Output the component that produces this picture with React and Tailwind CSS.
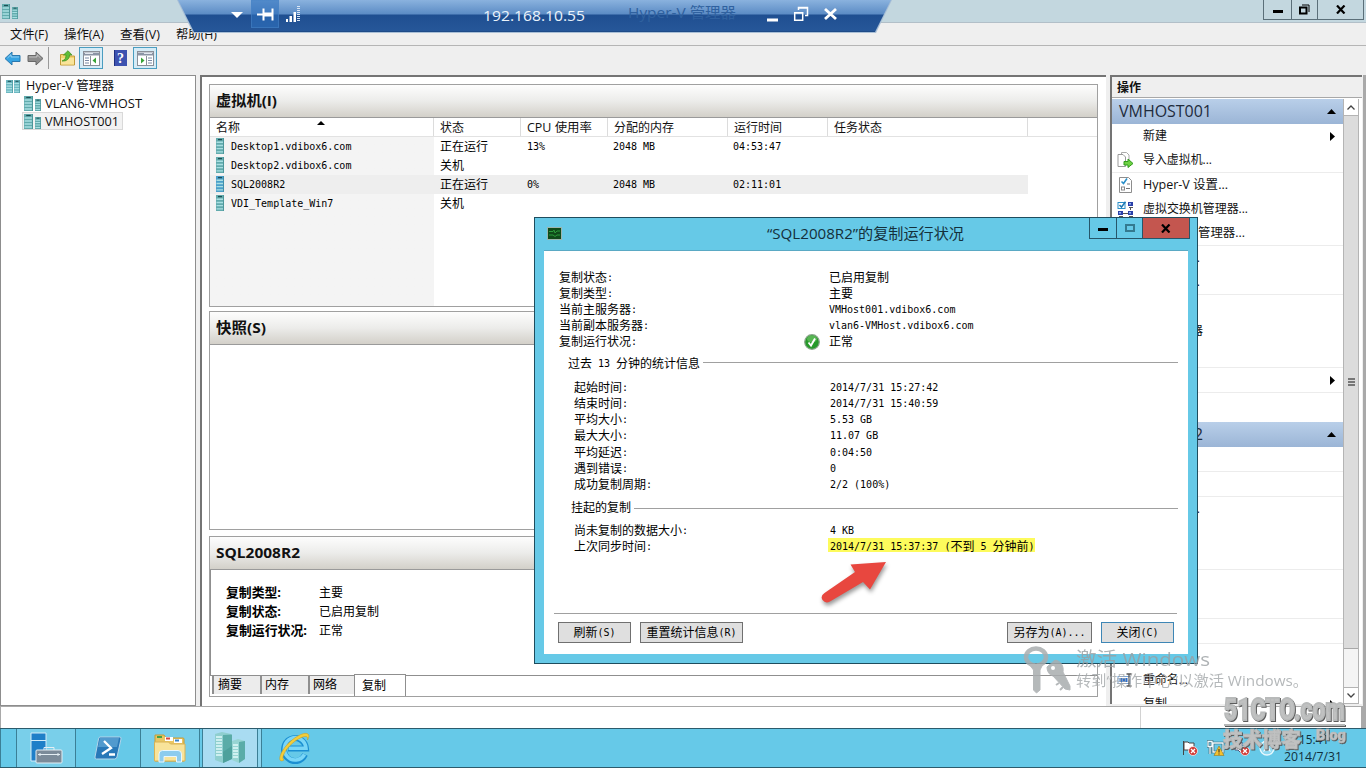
import React from 'react';

// Bitmap-like text: 12px Chinese glyphs with 6px wide latin cells
const Sim = ({ text }) => (
  <span className="inline-block align-top font-['Noto_Sans_CJK_SC',sans-serif] text-[12px] whitespace-pre">
    {text.split(/([\x20-\x7e]+)/).map((part, i) =>
      i % 2 ? (
        <span key={i} className="relative -top-px leading-[0px] font-['DejaVu_Sans_Mono','Liberation_Mono',monospace] text-[10px]">{part}</span>
      ) : (
        part
      )
    )}
  </span>
);

// Text stretched to an exact width
const Fit = ({ text, width, size, height = 20, weight = 400, fill = '#111' }) => (
  <svg width={width} height={height} className="overflow-visible shrink-0 block font-['Open_Sans','Noto_Sans_CJK_SC',sans-serif]">
    <text x="0" y={height / 2 + size * 0.37} fontSize={size} fontWeight={weight} fill={fill} textLength={width} lengthAdjust="spacingAndGlyphs">{text}</text>
  </svg>
);

const Rack = ({ w = 8, h = 15, color = '#62abad' }) => (
  <svg width={w} height={h} viewBox="0 0 8 15" preserveAspectRatio="none" className="shrink-0 block">
    <rect width="8" height="15" fill={color} />
    <path d="M.5 4h6.500M.5 7h6.500M.5 10h6.500M.5 13h6.500" stroke="#a9dfe2" strokeWidth="1.300" />
    <path d="M2 1.500h4" stroke="#1d4f55" strokeWidth="1.200" />
    <path d="M7.700 0v15" stroke="#3a8288" strokeWidth=".6" />
  </svg>
);

const Host = () => (
  <div className="flex items-end gap-[2px] w-[17px] shrink-0">
    <Rack w={9} h={15} />
    <Rack w={6} h={12} />
  </div>
);

const HostPair = () => (
  <div className="flex w-[14px] gap-px shrink-0 pt-[2px]">
    <Rack w={7} h={13} color="#6db8c2" />
    <Rack w={6} h={13} color="#6db8c2" />
  </div>
);

const Arrow = ({ fill, stroke, flip }) => (
  <svg width="17" height="15" viewBox="0 0 17 15" className={flip ? 'scale-x-[-1]' : ''}>
    <path d="M1 7.500 8 1v3.500h8v6H8V14z" fill={fill} stroke={stroke} strokeLinejoin="round" />
    <path d="M3.500 7 7 3.600V6h8" fill="none" stroke="#fff" strokeOpacity=".45" />
  </svg>
);

const PaneIcon = ({ flip }) => (
  <span className="w-[24px] h-[22px] border border-[#4a9dc0] bg-[#d5ebf6] flex items-center justify-center">
    <svg width="17" height="15" viewBox="0 0 17 15" className={flip ? 'scale-x-[-1]' : ''}>
      <rect x=".5" y=".5" width="16" height="14" fill="#fff" stroke="#8a8f98" />
      <path d="M1 1.500h15v3H1z" fill="#8b94a5" />
      <path d="M2 2.500h8" stroke="#e3e7ee" />
      <path d="M7.500 5v9" stroke="#8a8f98" />
      <path d="M2 7h4M2 9.500h4M2 12h4" stroke="#7a8aa5" />
      <path d="M13 6.500v6L9.500 9.500z" fill="#37a337" />
    </svg>
  </span>
);

const MenuBar = () => (
  <div className="h-[23px] bg-[#efefef] border-b border-[#b5b5b5] flex items-center pl-[10px] gap-4 shrink-0">
    <Fit text="文件(F)" width={38} size={12.5} />
    <Fit text="操作(A)" width={40} size={12.5} />
    <Fit text="查看(V)" width={40} size={12.5} />
    <Fit text="帮助(H)" width={41} size={12.5} />
  </div>
);

const ToolBar = () => (
  <div className="h-[29px] bg-[#efefef] flex items-center pl-1 pb-[5px] shrink-0">
    <Arrow fill="#35a3e2" stroke="#2b78ae" />
    <span className="w-[6px]" />
    <Arrow fill="#8c8c8c" stroke="#686868" flip />
    <span className="w-px h-[22px] bg-[#9a9a9a] ml-1 mr-[10px]" />
    <svg width="17" height="16" viewBox="0 0 17 16">
      <path d="M1.500 4.500h5l1.500 1.500h7.500v9h-14z" fill="#f3d56f" stroke="#c39a36" />
      <path d="M2 14.500V8h13v6.500z" fill="#f9e49a" />
      <path d="M3 11c3-1 4-3 4-6H4.500L9 .7 13 5h-2.500c0 4-3 6.500-7.500 6z" fill="#5fbd36" stroke="#3c8c1d" strokeWidth=".7" />
    </svg>
    <span className="w-[3px]" />
    <PaneIcon />
    <span className="w-[11px]" />
    <svg width="13" height="16" viewBox="0 0 13 16">
      <rect width="13" height="16" fill="#3d52b0" />
      <path d="M.5 0v16" stroke="#1e2f80" />
      <text x="3" y="13" fontSize="14" fontWeight="700" fill="#fff" fontFamily="Liberation Serif">?</text>
    </svg>
    <span className="w-[6px]" />
    <PaneIcon flip />
  </div>
);

const TreePane = () => (
  <div className="w-[196px] h-[631px] bg-white border border-[#8d8d8d] shrink-0">
    <div className="flex items-center h-[18px] pl-[5px] gap-[6px]">
      <HostPair />
      <Fit text="Hyper-V 管理器" width={88} size={12.5} />
    </div>
    <div className="flex items-center h-[18px] pl-[23px] gap-1">
      <Host />
      <Fit text="VLAN6-VMHOST" width={97} size={12.5} />
    </div>
    <div className="flex items-center h-[18px] ml-[21px] pl-[1px] gap-1 w-[101px] bg-[#f2f2f2] border border-[#d9d9d9]">
      <Host />
      <Fit text="VMHOST001" width={74} size={12.5} />
    </div>
  </div>
);

const SectionHead = ({ text, width }) => (
  <div className="h-[33px] bg-gradient-to-b from-[#fdfdfd] via-[#ececea] to-[#d3d0c9] border-b border-[#9a9a9a] flex items-center pl-[6px] shrink-0">
    <Fit text={text} width={width} size={14.5} weight={700} />
  </div>
);

const vms = [
  { name: 'Desktop1.vdibox6.com', state: '正在运行', cpu: '13%', mem: '2048 MB', time: '04:53:47' },
  { name: 'Desktop2.vdibox6.com', state: '关机', cpu: '', mem: '', time: '' },
  { name: 'SQL2008R2', state: '正在运行', cpu: '0%', mem: '2048 MB', time: '02:11:01', selected: true },
  { name: 'VDI_Template_Win7', state: '关机', cpu: '', mem: '', time: '' },
];

const columns = [
  { label: '名称', w: 'w-[224px]', t: 24 },
  { label: '状态', w: 'w-[87px]', t: 24 },
  { label: 'CPU 使用率', w: 'w-[87px]', t: 65 },
  { label: '分配的内存', w: 'w-[120px]', t: 60 },
  { label: '运行时间', w: 'w-[100px]', t: 48 },
  { label: '任务状态', w: 'w-[200px]', t: 48 },
];

const VmTable = () => (
  <div className="flex-1 flex flex-col bg-gradient-to-r from-[#f4f4f4] from-[224px] to-white to-[224px]">
    <div className="flex h-[19px] bg-white border-b border-[#e2e2e2] shrink-0">
      {columns.map((c, i) => (
        <div key={i} className={`${c.w} relative shrink-0 border-r border-[#dcdcdc] pl-[6px] pt-[2px] flex items-center`}>
          <Fit text={c.label} width={c.t} size={12} height={18} />
          {i === 0 && (
            <svg width="8" height="4" className="absolute left-[107px] top-[3px]">
              <path d="M0 4 4 0l4 4z" fill="#000" />
            </svg>
          )}
        </div>
      ))}
    </div>
    {vms.map((vm) => (
      <div key={vm.name} className={`flex h-[19px] leading-[17px] w-[818px] text-black ${vm.selected ? 'bg-[#eeeeee]' : ''}`}>
        <div className="w-[224px] pl-[6px] flex gap-[7px]">
          <span className="pt-px"><Rack w={8} h={16} color={vm.selected ? '#4a9fca' : '#62abad'} /></span>
          <Sim text={vm.name} />
        </div>
        <div className="w-[87px] pl-[6px]"><Sim text={vm.state} /></div>
        <div className="w-[87px] pl-[6px]"><Sim text={vm.cpu} /></div>
        <div className="w-[120px] pl-[5px]"><Sim text={vm.mem} /></div>
        <div className="w-[100px] pl-[5px]"><Sim text={vm.time} /></div>
      </div>
    ))}
  </div>
);

const details = [
  ['复制类型:', '主要', 55],
  ['复制状态:', '已启用复制', 55],
  ['复制运行状况:', '正常', 81],
];

const CenterPane = () => (
  <div className="w-[906px] ml-1 bg-white border-l-2 border-t-2 border-[#747474] pl-[7px] pr-2 pt-[7px] flex flex-col shrink-0">
    <div className="h-[223px] border border-[#a0a0a0] flex flex-col shrink-0">
      <SectionHead text="虚拟机(I)" width={61} />
      <VmTable />
    </div>
    <div className="h-[219px] mt-1 border border-[#a0a0a0] shrink-0">
      <SectionHead text="快照(S)" width={50} />
    </div>
    <div className="h-[161px] mt-[6px] border border-[#a0a0a0] flex flex-col shrink-0">
      <SectionHead text="SQL2008R2" width={84} />
      <div className="h-[106px] border-l border-b border-[#8f8f8f] pl-[15px] pt-[13px] shrink-0">
        {details.map(([label, value, w]) => (
          <div key={label} className="flex h-[19px] leading-[17px] text-black">
            <div className="w-[93px]"><Fit text={label} width={w} size={13} weight={700} height={18} fill="#000" /></div>
            <Sim text={value} />
          </div>
        ))}
      </div>
      <div className="flex h-[20px] pl-[2px] text-black">
        <div className="w-12 h-[18px] bg-[#ececec] border-l-2 border-[#8f8f8f] pl-1 leading-[15px]"><Sim text="摘要" /></div>
        <div className="w-12 h-[18px] bg-[#ececec] border-l-2 border-[#8f8f8f] pl-[3px] leading-[15px]"><Sim text="内存" /></div>
        <div className="w-[46px] h-[18px] bg-[#ececec] border-l-2 border-[#8f8f8f] pl-[3px] leading-[15px]"><Sim text="网络" /></div>
        <div className="w-[52px] h-[22px] -mt-[2px] relative bg-white border-x border-t border-[#8f8f8f] pl-[7px] leading-[20px]"><Sim text="复制" /></div>
      </div>
    </div>
  </div>
);

const ImportIcon = () => (
  <svg width="17" height="16" viewBox="0 0 17 16">
    <path d="M4.500.5h5l2.500 2.500v9h-7.500z" fill="#fff" stroke="#aaa" />
    <path d="M1 2.500h5l2.500 2.500v9.500H1z" fill="#fff" stroke="#999" />
    <path d="M7 9.500h4V7l5 4.500-5 4V13H7z" fill="#6ed143" stroke="#2f9a1c" />
  </svg>
);

const SettingsIcon = () => (
  <svg width="17" height="16" viewBox="0 0 17 16">
    <path d="M2.500.5h9L14.500 3.500v12h-12z" fill="#fff" stroke="#8d8d8d" />
    <path d="m4.500 4.500 2 2 3.500-5" fill="none" stroke="#2a8fc9" strokeWidth="1.600" />
    <path d="M10 7h3M9 11.500h4" stroke="#777" />
    <rect x="4.500" y="10" width="3" height="3" fill="none" stroke="#888" />
  </svg>
);

const SwitchIcon = () => (
  <svg width="17" height="16" viewBox="0 0 17 16">
    <rect x="1" y="1.500" width="7" height="6" fill="#fff" stroke="#2a8fc9" />
    <path d="m2.500 4 2 2L8.500.8" fill="none" stroke="#1b79b5" strokeWidth="1.500" />
    <path d="M11 1h5v4h-5zM1 10h5v4H1zM11 10h5v4h-5z" fill="#2a3fa8" />
    <path d="M12 2h2v1.500h-2zM2 11h2v1.500H2zM12 11h2v1.500h-2z" fill="#8fb3ef" />
    <path d="M13.500 6v3M6 12.500h5M2 15.500h4M12 15.500h4M12 6.500h4" stroke="#555" />
  </svg>
);

const RenameIcon = () => (
  <svg width="17" height="14" viewBox="0 0 17 14">
    <rect x="1" y="3.500" width="12" height="7" fill="#fff" stroke="#7aa5d8" />
    <rect x="2.500" y="5" width="8" height="4" fill="#2b6fd0" />
    <path d="M9.500 1h5M12 1v12M9.500 13h5" stroke="#555" strokeWidth="1.300" />
  </svg>
);

const ActionHead = ({ text, width }) => (
  <div className="h-[25px] bg-gradient-to-b from-[#b9cfe9] to-[#9bb5d6] flex items-center justify-between pl-[7px] pr-[7px] shrink-0">
    <Fit text={text} width={width} size={15.5} height={23} fill="#1e2b3c" />
    <svg width="9" height="5"><path d="M0 5 4.500 0 9 5z" fill="#000" /></svg>
  </div>
);

const Action = ({ text, width, icon: Icon, line, more }) => (
  <div className={`flex items-center pl-[5px] pr-2 shrink-0 ${line ? 'h-[25px] border-b border-[#ececec]' : 'h-[24px]'}`}>
    <span className="w-[26px] shrink-0">{Icon && <Icon />}</span>
    {text && <Fit text={text} width={width} size={12} />}
    <span className="flex-1" />
    {more && <svg width="5" height="9"><path d="M0 0 5 4.500 0 9z" fill="#000" /></svg>}
  </div>
);

const ActionsPane = () => (
  <div className="w-[252px] h-[629px] ml-[4px] border-l-2 border-t-2 border-[#747474] bg-white flex flex-col overflow-hidden shrink-0">
    <div className="h-[21px] bg-[#efefef] border-b border-[#a8a8a8] pl-[5px] pt-px flex items-center shrink-0">
      <Fit text="操作" width={24} size={12} weight={700} />
    </div>
    <div className="flex flex-1 min-h-0 pt-px">
      <div className="w-[231px] flex flex-col overflow-hidden">
        <ActionHead text="VMHOST001" width={93} />
        <Action text="新建" width={24} more />
        <Action text="导入虚拟机..." width={69} icon={ImportIcon} line />
        <Action text="Hyper-V 设置..." width={85} icon={SettingsIcon} />
        <Action text="虚拟交换机管理器..." width={105} icon={SwitchIcon} />
        <Action text="虚拟 SAN 管理器..." width={102} line />
        <Action text="编辑磁盘..." width={57} />
        <Action text="检查磁盘..." width={57} line />
        <Action />
        <Action text="删除服务器" width={60} />
        <Action line />
        <Action more line />
        <Action />
        <div className="h-[5px] shrink-0" />
        <ActionHead text="SQL2008R2" width={84} />
        <Action line />
        <Action line />
        <Action text="强行关闭..." width={57} />
        <Action />
        <Action line />
        <Action />
        <Action line />
        <Action line />
        <Action />
        <Action text="重命名..." width={45} icon={RenameIcon} />
        <Action text="复制" width={24} more />
      </div>
      <div className="w-[16px] flex flex-col bg-[#f4f4f4] border-x border-[#b4b4b4]">
        <div className="h-[17px] bg-white border-b border-[#b4b4b4] flex items-center justify-center shrink-0">
          <svg width="8" height="5"><path d="M.5 4.500 4 1l3.500 3.500" fill="none" stroke="#444" strokeWidth="1.300" /></svg>
        </div>
        <div className="h-[533px] bg-[#dcdcdc] border-b border-[#a8a8a8] flex flex-col items-center justify-center gap-px shrink-0">
          <span className="w-[7px] h-[2px] bg-[#777]" />
          <span className="w-[7px] h-[2px] bg-[#777]" />
          <span className="w-[7px] h-[2px] bg-[#777]" />
        </div>
        <div className="flex-1 bg-[#f4f4f4]" />
        <div className="h-[17px] bg-white border-y border-[#b4b4b4] flex items-center justify-center shrink-0">
          <svg width="8" height="5"><path d="M.5.5 4 4 7.500.5" fill="none" stroke="#444" strokeWidth="1.300" /></svg>
        </div>
      </div>
    </div>
  </div>
);

const ConnectionBar = () => (
  <div className="absolute left-[177px] top-0 w-[715px] h-[33px] bg-[#a9bfd6] [clip-path:polygon(0_0,715px_0,699px_33px,16px_33px)]">
    <div className="w-[715px] h-[32px] bg-[linear-gradient(180deg,#8ab2de_0,#5c8cc5_14px,#1f4f91_15px,#265799_31px,#173f76_32px)] [clip-path:polygon(1px_0,714px_0,698px_32px,17px_32px)] flex items-center pl-[54px]">
      <svg width="12" height="6" className="-mt-[2px]"><path d="M0 0h12L6 6z" fill="#fff" /></svg>
      <span className="w-[28px] h-[28px] -mt-1 ml-2 bg-[#2d70bd]/60 border border-[#4a86c8]/50 flex items-center justify-center">
        <svg width="17" height="14" viewBox="0 0 17 14">
          <path d="M0 7.500h6M6.500 1.500v12M15.500 1.500v12" stroke="#fff" strokeWidth="2" />
          <path d="M7 5.500h8v4H7z" fill="#fff" />
        </svg>
      </span>
      <svg width="17" height="16" viewBox="0 0 17 16" className="ml-[6px] -mt-[4px]">
        <path d="M1 13h2v3H1zM4.500 10h2.500v6H4.500zM8.500 6h2.500v10H8.500z" fill="#fff" />
        <path d="M13.500 0v16" stroke="#d9e6f5" strokeWidth="3" strokeDasharray="1 1" />
      </svg>
      <span className="w-[181px]" />
      <span className="-mt-[3px]"><Fit text="192.168.10.55" width={102} size={15} fill="#eaf3fb" /></span>
      <span className="w-[43px]" />
      <span className="pb-[9px]"><Fit text="Hyper-V 管理器" width={108} size={15} fill="#2f619f" /></span>
      <span className="w-[30px]" />
      <svg width="72" height="16" viewBox="0 0 72 16" className="-mt-[4px]">
        <path d="M1 12.500h11v3H1z" fill="#fff" />
        <path d="M32.500 4V1.500h9v8H39M32 2h10" fill="none" stroke="#fff" strokeWidth="1.500" />
        <path d="M28.700 6.700h8v7.500h-8zM28 7h9" fill="none" stroke="#fff" strokeWidth="1.500" />
        <path d="m59 3 11 10M70 3 59 13" stroke="#fff" strokeWidth="2.800" />
      </svg>
    </div>
  </div>
);

const WindowButtons = () => (
  <div className="flex h-[20px] border-x border-b border-[#5b6f79] mr-[2px]">
    <span className="w-[28px] border-r border-[#5b6f79] flex items-center justify-center pt-[3px]"><span className="w-[10px] h-[3px] bg-black" /></span>
    <span className="w-[26px] border-r border-[#5b6f79] flex items-center justify-center">
      <svg width="11" height="11"><path d="M3 1h7v7" fill="none" stroke="#000" /><path d="M1 3.500h6.500v6H1z" fill="none" stroke="#000" strokeWidth="2" /></svg>
    </span>
    <span className="w-[45px] flex items-center justify-center"><svg width="10" height="9"><path d="m1 .5 7.500 8M8.500.5 1 8.500" stroke="#000" strokeWidth="2.200" /></svg></span>
  </div>
);

const DRow = ({ label, value }) => (
  <div className="flex h-[16.150px] leading-[16px]">
    <div className="w-[256px]"><Sim text={label} /></div>
    <Sim text={value} />
  </div>
);

const Button = ({ text, border = 'border-[#707070]', className }) => (
  <div className={`h-[21px] border ${border} bg-[#dfdfdf] text-center leading-[18px] ${className}`}><Sim text={text} /></div>
);

const Dialog = () => (
  <div className="absolute left-[534px] top-[217px] w-[664px] h-[447px] bg-[#66c9e7] border border-[#1e4d5e] flex flex-col text-black">
    <div className="relative h-[32px] flex items-center shrink-0">
      <svg width="15" height="13" className="ml-3 -mt-[2px]" viewBox="0 0 15 13">
        <rect x=".5" y=".5" width="14" height="12" fill="#0f4a1a" stroke="#9db5ae" />
        <path d="M2 4.500h4l1-1.500 1 3 2-2h3M2 8h4l2 1.500L10 8h3" fill="none" stroke="#2d9a3c" />
      </svg>
      <span className="w-[205px]" />
      <Fit text="“SQL2008R2”的复制运行状况" width={197} size={14.5} fill="#14303b" />
      <div className="absolute top-0 right-[7px] flex h-[21px] border-x border-b border-[#26566a]">
        <span className="w-[27px] border-r border-[#26566a] flex items-center justify-center pt-[2px]"><span className="w-[10px] h-[3px] bg-black" /></span>
        <span className="w-[26px] border-r border-[#26566a] flex items-center justify-center"><span className="w-[10px] h-2 border-2 border-[#34798f]" /></span>
        <span className="w-[46px] bg-[#c4564f] flex items-center justify-center"><svg width="10" height="9"><path d="m1 .5 7.500 8M8.500.5 1 8.500" stroke="#000" strokeWidth="2.200" /></svg></span>
      </div>
    </div>
    <div className="relative mx-[9px] mb-[9px] flex-1 bg-white border-t border-[#5aa9c4] flex flex-col">
      <div className="pl-[15px] pt-[18px]">
        {[
          ['复制状态:', '已启用复制'],
          ['复制类型:', '主要'],
          ['当前主服务器:', 'VMHost001.vdibox6.com'],
          ['当前副本服务器:', 'vlan6-VMHost.vdibox6.com'],
          ['复制运行状况:', '正常'],
        ].map(([l, v]) => (
          <div key={l} className="flex h-4 leading-4">
            <div className="w-[245px]"><Sim text={l} /></div>
            <div className="w-[25px] pt-px">
              {v === '正常' && (
                <svg width="16" height="16" viewBox="0 0 16 16">
                  <circle cx="8" cy="8" r="7.300" fill="#279a2b" stroke="#8aa58b" strokeWidth="1.200" />
                  <ellipse cx="8" cy="5" rx="5" ry="3.500" fill="#7fce72" opacity=".55" />
                  <path d="m4.500 8.500 2.500 3 4-7" fill="none" stroke="#fff" strokeWidth="1.900" />
                </svg>
              )}
            </div>
            <Sim text={v} />
          </div>
        ))}
      </div>
      <div className="flex items-center h-4 leading-4 mt-[6px] pl-6 pr-[10px] gap-[3px]">
        <Sim text="过去 13 分钟的统计信息" />
        <span className="flex-1 h-px mb-[2px] bg-[#a0a0a0]" />
      </div>
      <div className="pl-[30px] pt-2">
        <DRow label="起始时间:" value="2014/7/31 15:27:42" />
        <DRow label="结束时间:" value="2014/7/31 15:40:59" />
        <DRow label="平均大小:" value="5.53 GB" />
        <DRow label="最大大小:" value="11.07 GB" />
        <DRow label="平均延迟:" value="0:04:50" />
        <DRow label="遇到错误:" value="0" />
        <DRow label="成功复制周期:" value="2/2 (100%)" />
      </div>
      <div className="flex items-center h-4 leading-4 mt-[7px] pl-[27px] pr-[10px] gap-[3px]">
        <Sim text="挂起的复制" />
        <span className="flex-1 h-px mt-[4px] bg-[#a0a0a0]" />
      </div>
      <div className="pl-[30px] pt-[7px]">
        <DRow label="尚未复制的数据大小:" value="4 KB" />
        <div className="flex h-4 leading-4">
          <div className="w-[254px]"><Sim text="上次同步时间:" /></div>
          <div className="w-[207px] h-[14px] pl-[2px] leading-[16px] bg-[#fdfb5c]"><Sim text="2014/7/31 15:37:37 (不到 5 分钟前)" /></div>
        </div>
      </div>
      <span className="flex-1" />
      <div className="h-[41px] ml-[10px] mr-[11px] border-t border-[#a0a0a0] pt-2 pl-1 pr-[3px] flex">
        <Button text="刷新(S)" className="w-[73px]" />
        <Button text="重置统计信息(R)" className="w-[103px] ml-[9px]" />
        <span className="flex-1" />
        <Button text="另存为(A)..." className="w-[85px]" />
        <Button text="关闭(C)" className="w-[73px] ml-[9px]" border="border-[#3e86b5]" />
      </div>
      <svg width="76" height="52" viewBox="0 0 76 52" className="absolute left-[274px] top-[307px] drop-shadow-[1px_3px_2px_rgba(0,0,0,0.4)]">
        <path d="M68 4 32.500 6.500 37 14 6.500 35Q2 38 4.500 42 7.500 46 12 43.500L45 24l7 7.500z" fill="#e8473f" />
      </svg>
    </div>
  </div>
);

const ServerManagerIcon = () => (
  <svg width="34" height="32" viewBox="0 0 34 32">
    <path d="M2 1h15v28H2z" fill="#1f7fc8" stroke="#d4ecf8" />
    <path d="M2 8.500h15" stroke="#d4ecf8" />
    <rect x="7" y="18" width="26" height="13" rx="1" fill="#7b8b99" stroke="#e4eef3" />
    <path d="M15 18v-2.500h10V18M9 22.500h22M11 21v3M29 21v3" stroke="#e4eef3" fill="none" />
  </svg>
);

const PowerShellIcon = () => (
  <svg width="28" height="24" viewBox="0 0 28 24">
    <path d="M6 1h19.500q2 0 1.500 2l-4 18q-.5 2-2.500 2H2.500Q.5 23 1 21L4.500 3Q5 1 6 1z" fill="#2878b8" stroke="#b4d5ea" />
    <path d="M6 2h19l-2 9H4z" fill="#6cb0dc" opacity=".6" />
    <path d="m10 5 7 7-9 6M15 18.500h6" fill="none" stroke="#fff" strokeWidth="2.300" />
  </svg>
);

const ExplorerIcon = () => (
  <svg width="34" height="30" viewBox="0 0 34 30">
    <path d="M2 5V2h9l2 3h17q1 0 1 1v22H2z" fill="#e9c662" stroke="#c69b38" />
    <path d="M4 3h5v2H4z" fill="#43a047" />
    <path d="M12 4h8v4h-8z" fill="#fff" /><path d="M13 4.500h4v2h-4z" fill="#d6453d" />
    <path d="M21 6h8v4h-8z" fill="#fff" /><path d="M22 6.500h4v2h-4z" fill="#3985c8" />
    <path d="M1.500 9h14l2 2h14.500v17H1.500z" fill="#f8e39a" stroke="#d8b355" />
    <path d="M6 29v-8q0-3.500 3.500-3.500H25q3.500 0 3.500 3.500v8h-5v-5.500H11V29z" fill="#8dccee" stroke="#e8f7ff" />
  </svg>
);

const HyperVIcon = () => (
  <svg width="34" height="32" viewBox="0 0 34 32">
    <path d="m2 2 7-2 9 2v25l-8 4-8-3z" fill="#8fcfcf" />
    <path d="m10 3 9-.5V27l-9 4z" fill="#5aaca8" />
    <path d="M3 5h6M3 8h6M3 11h6M3 14h6M3 17h6M3 20h6M3 23h6" stroke="#e2fafa" strokeWidth="1.500" />
    <path d="M10 20l9-6v13l-9 4z" fill="#3f958f" opacity=".5" />
    <path d="m19 9 6-2 7 2v18l-6 4-7-3z" fill="#97d5d3" />
    <path d="m26 10 6-1v18l-6 4z" fill="#5aaca8" />
    <path d="M20 13h5M20 16h5M20 19h5M20 22h5M20 25h5" stroke="#e2fafa" strokeWidth="1.500" />
  </svg>
);

const IEIcon = () => (
  <svg width="34" height="32" viewBox="0 0 34 32">
    <path d="M27 22.500A11 11.500 0 1 1 28 16.500H10" fill="none" stroke="#1b8fd2" strokeWidth="6" />
    <path d="M26.500 22.500A10.800 11.200 0 1 1 28 16.300H10.500" fill="none" stroke="#7ad6f7" strokeWidth="3.600" />
    <path d="M6 28c-5 3-6-2-1-10C12 7 26-1 30 2c1.500 1 1 4-.5 6 .5-3-.5-4-3-3.500C19 6 9 15 6 22c-1.500 3-1.500 5 0 6z" fill="#f3cd3a" stroke="#c59a20" strokeWidth=".5" />
  </svg>
);

const Badge = () => (
  <>
    <circle cx="11" cy="11" r="4.500" fill="#d13a35" stroke="#fff" strokeWidth=".7" />
    <path d="m9 9 4 4M13 9l-4 4" stroke="#fff" strokeWidth="1.300" />
  </>
);

const TaskBar = () => (
  <div className="h-[40px] bg-[#66c9e8] border-y border-[#2c5b6c] flex shrink-0">
    <div className="w-[17px] border-x border-[#3b7f96]" />
    <div className="w-[59px] bg-[#79cfea] border-r border-[#3b7f96] flex items-center justify-center"><ServerManagerIcon /></div>
    <div className="w-[65px] border-r border-[#3b7f96] flex items-center justify-center"><PowerShellIcon /></div>
    <div className="w-[59px] bg-[#79cfea] border-r border-[#3b7f96] flex items-center justify-center"><ExplorerIcon /></div>
    <div className="w-[3px] border-r border-[#3b7f96]" />
    <div className="w-[55px] bg-[#a9dcf2] border-r border-[#3b7f96] flex items-center justify-center"><HyperVIcon /></div>
    <div className="w-[4px] border-r border-[#3b7f96] bg-[#8fd5ee]" />
    <div className="w-[65px] flex items-center justify-center"><IEIcon /></div>
    <span className="flex-1" />
    <div className="flex items-center gap-[9px] w-[102px]">
      <svg width="16" height="16" viewBox="0 0 16 16" className="shrink-0"><path d="M1.500 1v14M2 2h4l1 1h5v7H2z" fill="#fff" stroke="#444" /><Badge /></svg>
      <svg width="18" height="16" viewBox="0 0 18 16" className="shrink-0">
        <path d="M6 3h10v9H6zM1 1.500h4v5H1zM3 6v8" fill="#66c9e8" stroke="#37606e" strokeWidth="2.600" />
        <path d="M6 3h10v9H6zM1 1.500h4v5H1zM3 6v8" fill="none" stroke="#eefaff" strokeWidth="1.300" />
        <path d="m12 6 5 9.500H7z" fill="#f6c12c" stroke="#8a6b12" strokeWidth=".5" /><path d="M12 9v3.500M12 13.500v1" stroke="#222" />
      </svg>
      <svg width="16" height="16" viewBox="0 0 16 16" className="shrink-0"><path d="M1 6h3l4-4v12l-4-4H1z" fill="#fff" stroke="#557" /><Badge /></svg>
      <svg width="16" height="16" viewBox="0 0 16 16" className="shrink-0"><circle cx="8" cy="8" r="7" fill="#8edaf2" stroke="#e8f8fd" strokeWidth="1.300" /><path d="m8 3 4 9-4-2-4 2z" fill="#eefaff" /></svg>
    </div>
    <div className="w-[82px] pt-[2px] flex flex-col">
      <div className="pl-[15px] h-[17px]"><Fit text="15:41" width={30} size={12} height={18} fill="#10303c" /></div>
      <Fit text="2014/7/31" width={58} size={12} height={18} fill="#10303c" />
    </div>
  </div>
);

// Translucent overlays at the lower right corner
const Watermarks = () => (
  <>
    <svg width="290" height="52" viewBox="0 0 290 52" className="absolute left-[1022px] top-[643px] font-['Open_Sans','Noto_Sans_CJK_SC',sans-serif]">
      <g fill="none" stroke="#a9adaf" opacity=".85">
        <ellipse cx="14" cy="14" rx="10" ry="8.500" strokeWidth="4.500" />
        <path d="M7 21q7 5 14 0l-3 6v20l-3.500 3-3-3V27z" fill="#a9adaf" strokeWidth="1" />
        <path d="m25 24 8-7c6 1 9 6 8 12l7 14v4l-5-1-12-13c-4-1-6-5-6-9z" fill="#a9adaf" strokeWidth="1" />
        <path d="m37 40-3 2M41 44l-3 3" strokeWidth="2" />
      </g>
      <circle cx="31" cy="25" r="2" fill="#fff" />
      <text x="54" y="23" fontSize="19" textLength="134" lengthAdjust="spacingAndGlyphs" fill="#9a9fa2" opacity=".8">激活 Windows</text>
      <text x="54" y="43" fontSize="15" textLength="232" lengthAdjust="spacingAndGlyphs" fill="#a8acae" opacity=".85">转到“操作中心”以激活 Windows。</text>
    </svg>
    <svg width="130" height="60" viewBox="0 0 130 60" className="absolute left-[1220px] top-[694px] font-['Roboto','Noto_Sans_CJK_SC',sans-serif] drop-shadow-[1px_1px_0_#5c5c5c]">
      <g fill="#c0c1c1" stroke="#b8baba" strokeWidth="1.800" fontWeight="900">
        <text x="4" y="26" fontSize="31" textLength="121" lengthAdjust="spacingAndGlyphs">51CTO.com</text>
        <path d="M4 31h121" strokeWidth="2" />
        <text x="3" y="53" fontSize="20" strokeWidth=".8" textLength="78" lengthAdjust="spacingAndGlyphs">技术博客</text>
        <text x="96" y="46" fontSize="15" strokeWidth=".5" textLength="30" lengthAdjust="spacingAndGlyphs">Blog</text>
      </g>
    </svg>
  </>
);

export default function App() {
  return (
    <div className="relative w-[1366px] h-[768px] overflow-hidden flex flex-col bg-[#efefef]">
      <div className="h-[23px] bg-[#c3d7df] border-b border-[#b2bfc8] flex justify-between shrink-0">
        <div className="flex items-end gap-[2px] h-[19px] pl-[2px]"><Rack w={8} h={15} /><Rack w={6} h={12} /></div>
        <WindowButtons />
      </div>
      <MenuBar />
      <ToolBar />
      <div className="flex h-[631px] shrink-0">
        <TreePane />
        <CenterPane />
        <ActionsPane />
        <div className="flex-1 ml-px bg-[#a9a9a9]" />
      </div>
      <div className="h-[22px] bg-white border-t border-x border-[#a9a9a9] flex justify-end shrink-0">
        <div className="w-[225px] border-l border-[#d2d2d2] flex justify-end"><div className="w-[4px] bg-[#a9a9a9]" /></div>
      </div>
      <TaskBar />
      <ConnectionBar />
      <Dialog />
      <Watermarks />
    </div>
  );
}
